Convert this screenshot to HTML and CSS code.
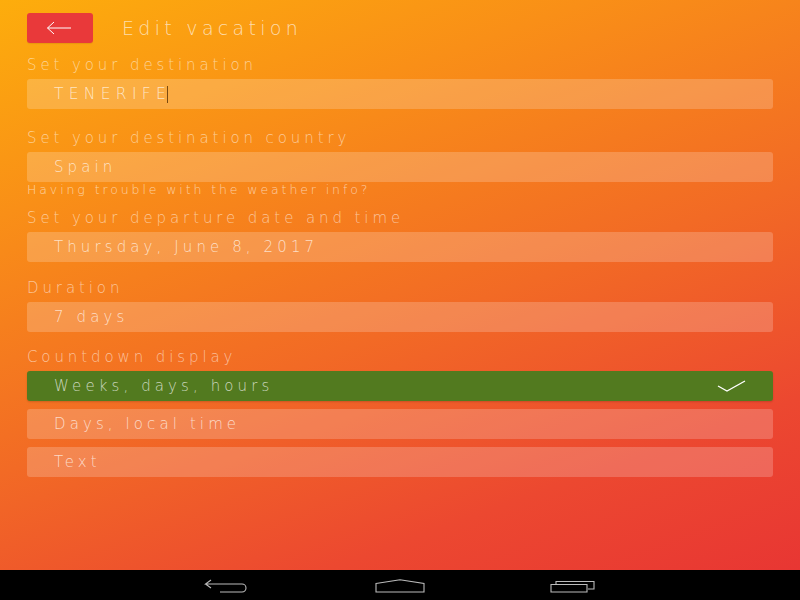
FILE: index.html
```html
<!DOCTYPE html>
<html>
<head>
<meta charset="utf-8">
<link rel="stylesheet" href="styles.css">
</head>
<body>
<div class="screen">
  <main class="app">
    <header class="topbar">
      <button class="back-btn" aria-label="Back">
        <svg width="26" height="14" viewBox="0 0 26 14"><path d="M25 7H1.5M8 1L1.5 7 8 13" fill="none" stroke="#fff" stroke-width="1"/></svg>
      </button>
      <h1 class="title">Edit vacation</h1>
    </header>
    <section class="form">
      <div class="field">
        <label class="label">Set your destination</label>
        <div class="input caps">TENERIFE<span class="cursor"></span></div>
      </div>
      <div class="field">
        <label class="label">Set your destination country</label>
        <div class="input">Spain</div>
        <p class="hint">Having trouble with the weather info?</p>
      </div>
      <div class="field">
        <label class="label">Set your departure date and time</label>
        <div class="input">Thursday, June 8, 2017</div>
      </div>
      <div class="field">
        <label class="label">Duration</label>
        <div class="input">7 days</div>
      </div>
      <div class="field">
        <label class="label">Countdown display</label>
        <div class="options">
          <div class="input option selected">Weeks, days, hours
            <svg class="check" width="30" height="12" viewBox="0 0 30 12"><path d="M1 6l9 5 18-10" fill="none" stroke="#fff" stroke-width="1.3"/></svg>
          </div>
          <div class="input option">Days, local time</div>
          <div class="input option">Text</div>
        </div>
      </div>
    </section>
  </main>
  <nav class="navbar">
    <svg width="46" height="14" viewBox="0 0 46 14"><path d="M7 1L1.5 5H38a4 4 0 0 1 0 8H16M1.5 5L7 9" fill="none" stroke="#bbb" stroke-width="1.1"/></svg>
    <svg width="50" height="14" viewBox="0 0 50 14"><path d="M1 4.5L25 0.8 49 4.5V13H1z" fill="none" stroke="#bbb" stroke-width="1.1"/></svg>
    <svg width="46" height="14" viewBox="0 0 46 14"><path d="M1 5.5h36V13H1z M6 5.5V2.5h38V10h-6" fill="none" stroke="#bbb" stroke-width="1.1"/></svg>
  </nav>
</div>
</body>
</html>
```
FILE: styles.css
```css
* { box-sizing: border-box; }
html, body { margin: 0; padding: 0; }
body {
  width: 800px;
  height: 600px;
  overflow: hidden;
  font-family: "DejaVu Sans", "Liberation Sans", sans-serif;
  font-weight: 200;
  color: rgba(255,255,255,0.6);
}
.screen {
  display: flex;
  flex-direction: column;
  height: 600px;
}
.app {
  flex: 1;
  background: linear-gradient(160deg, #fdad0c 0%, #f98f17 25%, #f26a25 55%, #ec4830 80%, #e83633 100%);
  padding: 13px 27px 0 27px;
}
.topbar {
  display: flex;
  align-items: center;
  height: 30px;
}
.back-btn {
  width: 66px;
  height: 30px;
  border: none;
  border-radius: 3px;
  background: #e9393a;
  display: flex;
  align-items: center;
  justify-content: center;
  padding: 0 2px 0 0;
  box-shadow: 0 1px 1px rgba(0,0,0,0.08);
}
.title {
  margin: 0 0 0 29px;
  font-size: 19px;
  font-weight: 200;
  letter-spacing: 4.3px;
  color: rgba(255,255,255,0.65);
}
.form {
  display: flex;
  flex-direction: column;
}
.field {
  display: flex;
  flex-direction: column;
}
.label {
  font-size: 15px;
  line-height: 20px;
  letter-spacing: 3.9px;
  margin-top: 16px;
  margin-bottom: 4px;
  color: rgba(255,255,255,0.55);
}
.field:first-child .label { margin-top: 12px; }
.field:nth-child(2) .label { margin-top: 19px; }
.field:last-child .label { margin-top: 15px; }
.input {
  height: 30px;
  border-radius: 3px;
  background: rgba(255,255,255,0.2);
  padding-left: 27px;
  display: flex;
  align-items: center;
  font-size: 15px;
  letter-spacing: 4.1px;
  color: rgba(255,255,255,0.7);
}
.caps { font-size: 15.5px; letter-spacing: 5.3px; }
.cursor {
  display: inline-block;
  width: 1px;
  height: 17px;
  background: #7a4a10;
  margin-left: -4px;
}
.hint {
  margin: 1px 0 -5px 0;
  font-size: 12.5px;
  line-height: 14px;
  letter-spacing: 2.9px;
  color: rgba(255,255,255,0.6);
}
.options {
  display: flex;
  flex-direction: column;
  gap: 8px;
}
.option.selected {
  background: #527a1f;
  justify-content: space-between;
  padding-right: 26px;
  box-shadow: 0 1px 2px rgba(0,0,0,0.15);
}
.navbar {
  height: 30px;
  background: #000;
  display: flex;
  align-items: center;
  justify-content: center;
  gap: 125px;
  padding-top: 2px;
}
```
